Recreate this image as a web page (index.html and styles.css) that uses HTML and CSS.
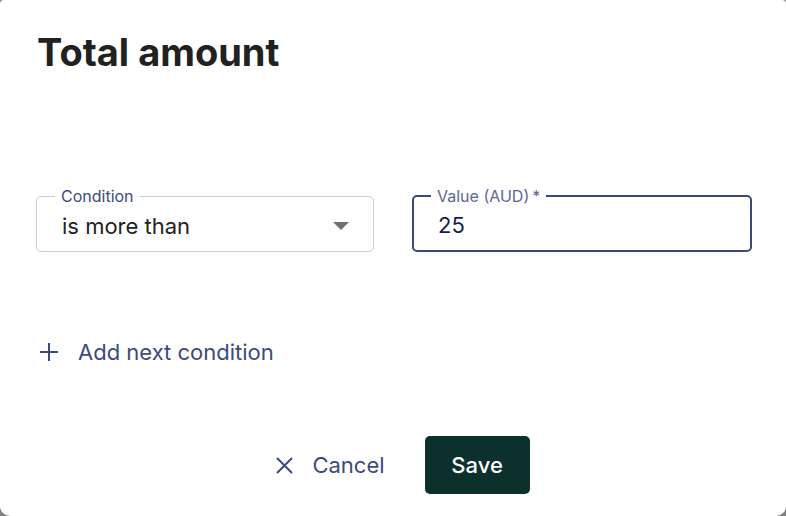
FILE: index.html
```html
<!DOCTYPE html>
<html lang="en">
<head>
    <meta charset="UTF-8">
    <meta name="viewport" content="width=device-width, initial-scale=1.0">
    <title>Total amount</title>
    <link rel="stylesheet" href="styles.css">
</head>
<body>
    <div class="dialog">
        <h1>Total amount</h1>

        <div class="fields">
            <fieldset class="field">
                <legend>Condition</legend>
                <span class="field-value">is more than</span>
                <svg class="caret" width="16" height="8" viewBox="0 0 16 8"><path d="M0 0h16L8 8z" fill="#707070"/></svg>
            </fieldset>
            <fieldset class="field field-active">
                <legend>Value (AUD)&thinsp;*</legend>
                <span class="field-value number">25</span>
            </fieldset>
        </div>

        <button class="link-btn add-btn">
            <svg width="18" height="18" viewBox="0 0 18 18"><path d="M9 0v18M0 9h18" stroke="currentColor" stroke-width="2"/></svg>
            Add next condition
        </button>

        <div class="actions">
            <button class="link-btn cancel-btn">
                <svg width="17" height="17" viewBox="0 0 17 17"><path d="M1 1l15 15M16 1L1 16" stroke="currentColor" stroke-width="2"/></svg>
                Cancel
            </button>
            <button class="save-btn">Save</button>
        </div>
    </div>
</body>
</html>
```

FILE: styles.css
```css
body {
    margin: 0;
    background: #808080;
    font-family: Inter, "Noto Sans", sans-serif;
}

.dialog {
    width: 786px;
    height: 516px;
    box-sizing: border-box;
    background: white;
    border-radius: 4px 4px 10px 10px;
    padding: 30px 34px 0 36px;
    display: flex;
    flex-direction: column;
}

h1 {
    margin: 0 0 0 1px;
    font-size: 38px;
    font-weight: 700;
    line-height: 45px;
    color: #212121;
}

.fields {
    display: flex;
    gap: 38px;
    margin-top: 111px;
}

.field {
    flex: 1;
    min-width: 0;
    margin: 0;
    height: 66px;
    box-sizing: border-box;
    border: 1px solid #cacbdc;
    border-radius: 5px;
    padding: 0 24px 6px 0;
    display: flex;
    align-items: center;
    justify-content: space-between;
}

.field legend {
    margin-left: 18px;
    padding: 0 6px;
    font-size: 16px;
    color: #3d4a7c;
}

.field-active {
    border: 2px solid #3b4a7b;
}

.field-active legend {
    margin-left: 17px;
    color: #5d678f;
}

.field-value {
    margin-left: 25px;
    font-size: 22px;
    color: #222;
}

.field-active .field-value {
    margin-left: 24px;
}

.number {
    color: #141f4c;
}

.link-btn {
    display: flex;
    align-items: center;
    gap: 20px;
    background: none;
    border: none;
    padding: 0;
    font-family: inherit;
    font-size: 22px;
    color: #3d4a7d;
    cursor: pointer;
}

.add-btn {
    align-self: flex-start;
    margin: 87px 0 0 4px;
}

.cancel-btn {
    gap: 19px;
}

.actions {
    display: flex;
    justify-content: center;
    align-items: center;
    gap: 40px;
    margin-top: 71px;
    padding-left: 18px;
}

.save-btn {
    width: 105px;
    height: 58px;
    background: #0c302b;
    color: white;
    border: none;
    border-radius: 5px;
    font-family: inherit;
    font-size: 22px;
    font-weight: 500;
    cursor: pointer;
}
```
